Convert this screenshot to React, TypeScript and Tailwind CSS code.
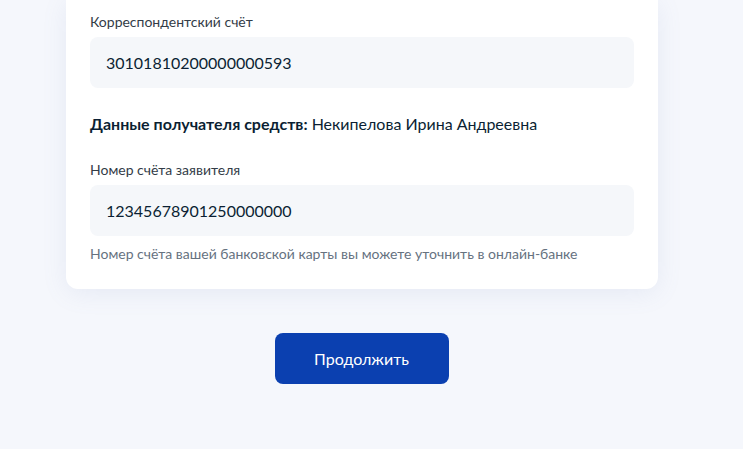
export default function App() {
  return (
    <div className="min-h-[449px] w-[743px] bg-[#f5f7fc] font-['Lato','Noto_Sans',sans-serif] text-[#0b1f33]">
      <div className="flex flex-col items-center">
        <div className="w-[592px] ml-[-19px] rounded-b-[12px] bg-white px-6 pt-[13px] pb-[26px] shadow-[0_4px_24px_rgba(120,140,190,0.12)]">
          <div className="text-[14px] leading-[18px] text-[#333c47]">Корреспондентский счёт</div>
          <div className="mt-[6px] flex h-[51px] items-center rounded-[8px] bg-[#f5f7fa] px-4 text-[16px]">
            30101810200000000593
          </div>
          <div className="mt-6 text-[16px] leading-[24px]">
            <span className="font-bold">Данные получателя средств:</span> Некипелова Ирина Андреевна
          </div>
          <div className="mt-[25px] text-[14px] leading-[18px] text-[#333c47]">Номер счёта заявителя</div>
          <div className="mt-[6px] flex h-[51px] items-center rounded-[8px] bg-[#f5f7fa] px-4 text-[16px]">
            12345678901250000000
          </div>
          <div className="mt-[9px] text-[14px] leading-[18px] text-[#66727f]">
            Номер счёта вашей банковской карты вы можете уточнить в онлайн-банке
          </div>
        </div>
        <button className="mt-[44px] ml-[-20px] h-[51px] w-[174px] rounded-[8px] bg-[#0b40b0] text-[16px] text-white">
          Продолжить
        </button>
      </div>
    </div>
  );
}
